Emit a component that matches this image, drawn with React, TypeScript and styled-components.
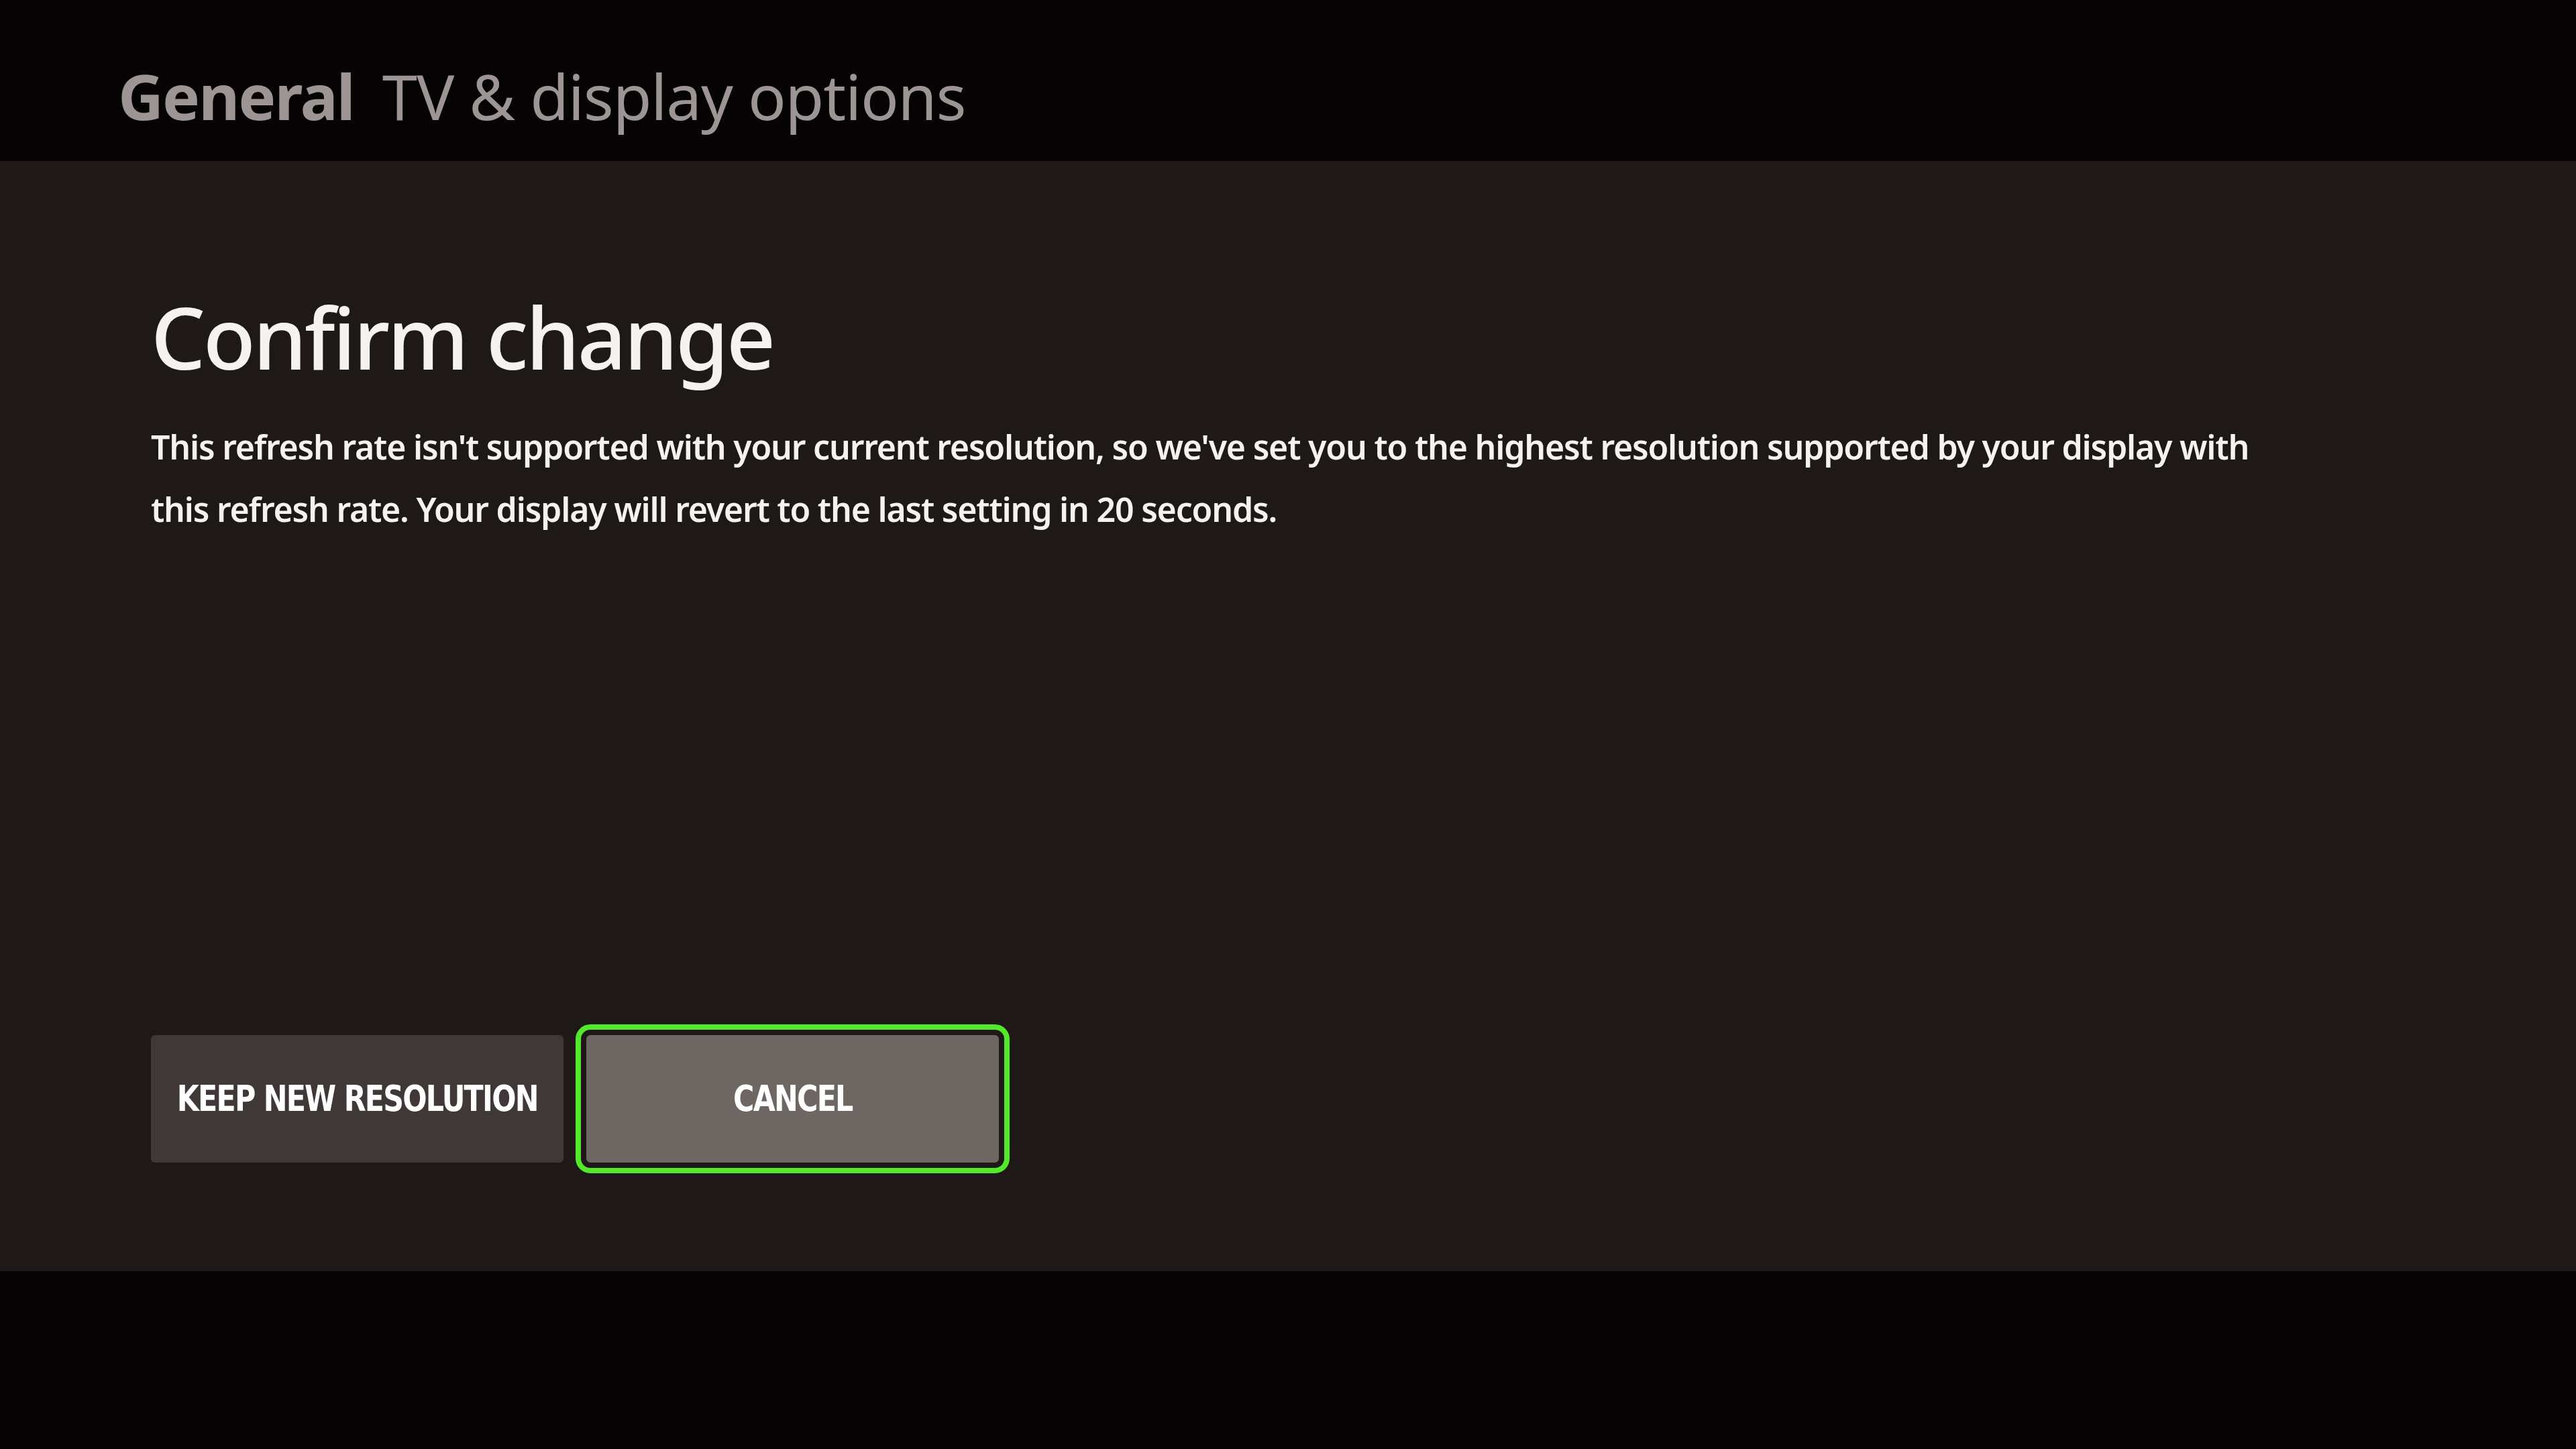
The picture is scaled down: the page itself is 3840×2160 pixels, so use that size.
import styled, { createGlobalStyle } from "styled-components";

const GlobalStyle = createGlobalStyle`
  html, body {
    margin: 0;
    padding: 0;
    background: #050304;
  }
  * {
    box-sizing: border-box;
  }
`;

const Screen = styled.div`
  width: 3840px;
  height: 2160px;
  display: flex;
  flex-direction: column;
  background: #050304;
  overflow: hidden;
`;

const TopBar = styled.header`
  height: 240px;
  flex: none;
  display: flex;
  align-items: baseline;
  gap: 42px;
  padding: 96px 0 0 176px;
  font-family: "Noto Sans", "Open Sans", sans-serif;
  font-size: 94px;
  line-height: 1;
  letter-spacing: -1.2px;
  color: #9d9593;
`;

const Section = styled.span`
  font-weight: 700;
  letter-spacing: -2px;
`;

const Page = styled.span`
  font-weight: 400;
`;

const Panel = styled.main`
  height: 1655px;
  flex: none;
  display: flex;
  flex-direction: column;
  padding: 192px 0 0 225px;
  background: #1e1917;
  font-family: "Noto Sans", "Open Sans", sans-serif;
  color: #f6f2f0;
`;

const Title = styled.h1`
  margin: 0;
  font-size: 128px;
  font-weight: 500;
  line-height: 1.1;
  letter-spacing: -3.6px;
`;

const Message = styled.p`
  margin: 47px 0 0;
  font-size: 50px;
  font-weight: 600;
  line-height: 93px;
  letter-spacing: -1.2px;
`;

const Actions = styled.div`
  margin-top: 737px;
  display: flex;
  gap: 34px;
`;

const Button = styled.button<{ $focused?: boolean }>`
  width: 615px;
  height: 190px;
  display: flex;
  align-items: center;
  justify-content: center;
  border: none;
  border-radius: 6px;
  padding: 0;
  background: ${(p) => (p.$focused ? "#6e6663" : "#3f3836")};
  color: #ffffff;
  font-family: "DejaVu Sans", sans-serif;
  font-stretch: condensed;
  font-size: 54px;
  font-weight: 700;
  text-transform: uppercase;
  letter-spacing: -2px;
  white-space: nowrap;
  outline: ${(p) => (p.$focused ? "8px solid #52e82c" : "none")};
  outline-offset: 8px;
`;

// the console's button face is a tighter condensed cut than DejaVu's
const Label = styled.span`
  display: inline-block;
  transform: scaleX(0.88);
`;

export default function App() {
  return (
    <>
      <GlobalStyle />
      <Screen>
        <TopBar>
          <Section>General</Section>
          <Page>TV &amp; display options</Page>
        </TopBar>
        <Panel>
          <Title>Confirm change</Title>
          <Message>
            This refresh rate isn't supported with your current resolution, so
            we've set you to the highest resolution supported by your display
            with
            <br />
            this refresh rate. Your display will revert to the last setting in
            20 seconds.
          </Message>
          <Actions>
            <Button>
              <Label>Keep new resolution</Label>
            </Button>
            <Button $focused>
              <Label>Cancel</Label>
            </Button>
          </Actions>
        </Panel>
      </Screen>
    </>
  );
}
